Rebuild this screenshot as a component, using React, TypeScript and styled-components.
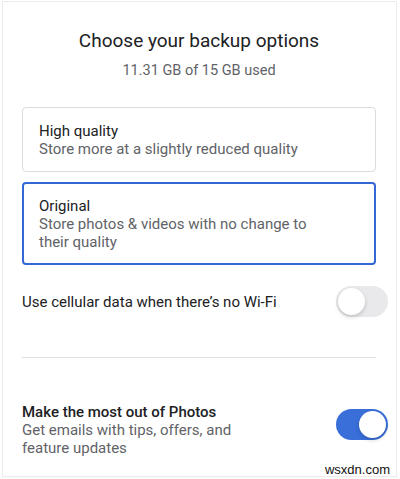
import React from 'react';
import styled, { createGlobalStyle } from 'styled-components';

const GlobalStyle = createGlobalStyle`
  body {
    margin: 0;
    background: #ffffff;
    font-family: Roboto, "Liberation Sans", Arial, sans-serif;
    color: #202124;
  }
`;

const App = () => {
  return (
    <>
      <GlobalStyle />
      <Frame>
        <Header>
          <Title>Choose your backup options</Title>
          <Usage>11.31 GB of 15 GB used</Usage>
        </Header>
        <Options>
          <OptionCard>
            <OptionTitle>High quality</OptionTitle>
            <OptionText>Store more at a slightly reduced quality</OptionText>
          </OptionCard>
          <OptionCard selected>
            <OptionTitle>Original</OptionTitle>
            <OptionText>
              Store photos &amp; videos with no change to
              <br />
              their quality
            </OptionText>
          </OptionCard>
        </Options>
        <SettingRow>
          <RowLabel>Use cellular data when there’s no Wi-Fi</RowLabel>
          <Toggle />
        </SettingRow>
        <Divider />
        <SettingRow tall>
          <div>
            <RowTitle>Make the most out of Photos</RowTitle>
            <OptionText>
              Get emails with tips, offers, and
              <br />
              feature updates
            </OptionText>
          </div>
          <Toggle on />
        </SettingRow>
        <Watermark>wsxdn.com</Watermark>
      </Frame>
    </>
  );
};

export default App;

const Frame = styled.div`
  position: relative;
  box-sizing: border-box;
  margin: 1px 0 0 2px;
  width: 395px;
  height: 476px;
  border: 1px solid #ececec;
  padding: 27px 20px 0 19px;
`;

const Header = styled.div`
  display: flex;
  flex-direction: column;
  align-items: center;
  gap: 8px;
`;

const Title = styled.div`
  font-size: 19px;
  line-height: 24px;
  color: #202124;
`;

const Usage = styled.div`
  font-size: 14.5px;
  line-height: 20px;
  color: #5f6368;
`;

const Options = styled.div`
  display: flex;
  flex-direction: column;
  gap: 10px;
  margin-top: 26px;
`;

const OptionCard = styled.div<{ selected?: boolean }>`
  box-sizing: border-box;
  padding: ${(p) => (p.selected ? '13px 15px 12px' : '14px 16px 13px')};
  border: ${(p) => (p.selected ? '2px solid #3367d6' : '1px solid #dadce0')};
  border-radius: 4px;
`;

const OptionTitle = styled.div`
  font-size: 15px;
  line-height: 18px;
  color: #202124;
`;

const OptionText = styled.div`
  font-size: 15px;
  line-height: 18px;
  color: #5f6368;
`;

const SettingRow = styled.div<{ tall?: boolean }>`
  display: flex;
  align-items: ${(p) => (p.tall ? 'flex-start' : 'center')};
  justify-content: space-between;
  margin-top: ${(p) => (p.tall ? '45px' : '21px')};
  margin-right: -12px;
`;

const RowLabel = styled.div`
  font-size: 15px;
  line-height: 18px;
  color: #202124;
`;

const RowTitle = styled.div`
  font-size: 15px;
  line-height: 18px;
  font-weight: 500;
  color: #202124;
`;

const Divider = styled.div`
  height: 1px;
  background: #e0e0e0;
  margin-top: 40px;
`;

const Toggle = styled.div<{ on?: boolean }>`
  position: relative;
  flex: none;
  width: 52px;
  height: 31px;
  margin-top: ${(p) => (p.on ? '6px' : '0')};
  border-radius: 16px;
  background: ${(p) => (p.on ? '#3a6fd9' : '#e9e9eb')};

  &::after {
    content: '';
    position: absolute;
    top: 2px;
    left: ${(p) => (p.on ? '23px' : '2px')};
    width: 27px;
    height: 27px;
    border-radius: 50%;
    background: #ffffff;
    box-shadow: 0 2px 4px rgba(0, 0, 0, 0.18);
  }
`;

const Watermark = styled.div`
  position: absolute;
  right: 6px;
  bottom: -2px;
  font-family: "Liberation Sans", Arial, sans-serif;
  font-size: 13px;
  line-height: 16px;
  color: #111111;
`;
